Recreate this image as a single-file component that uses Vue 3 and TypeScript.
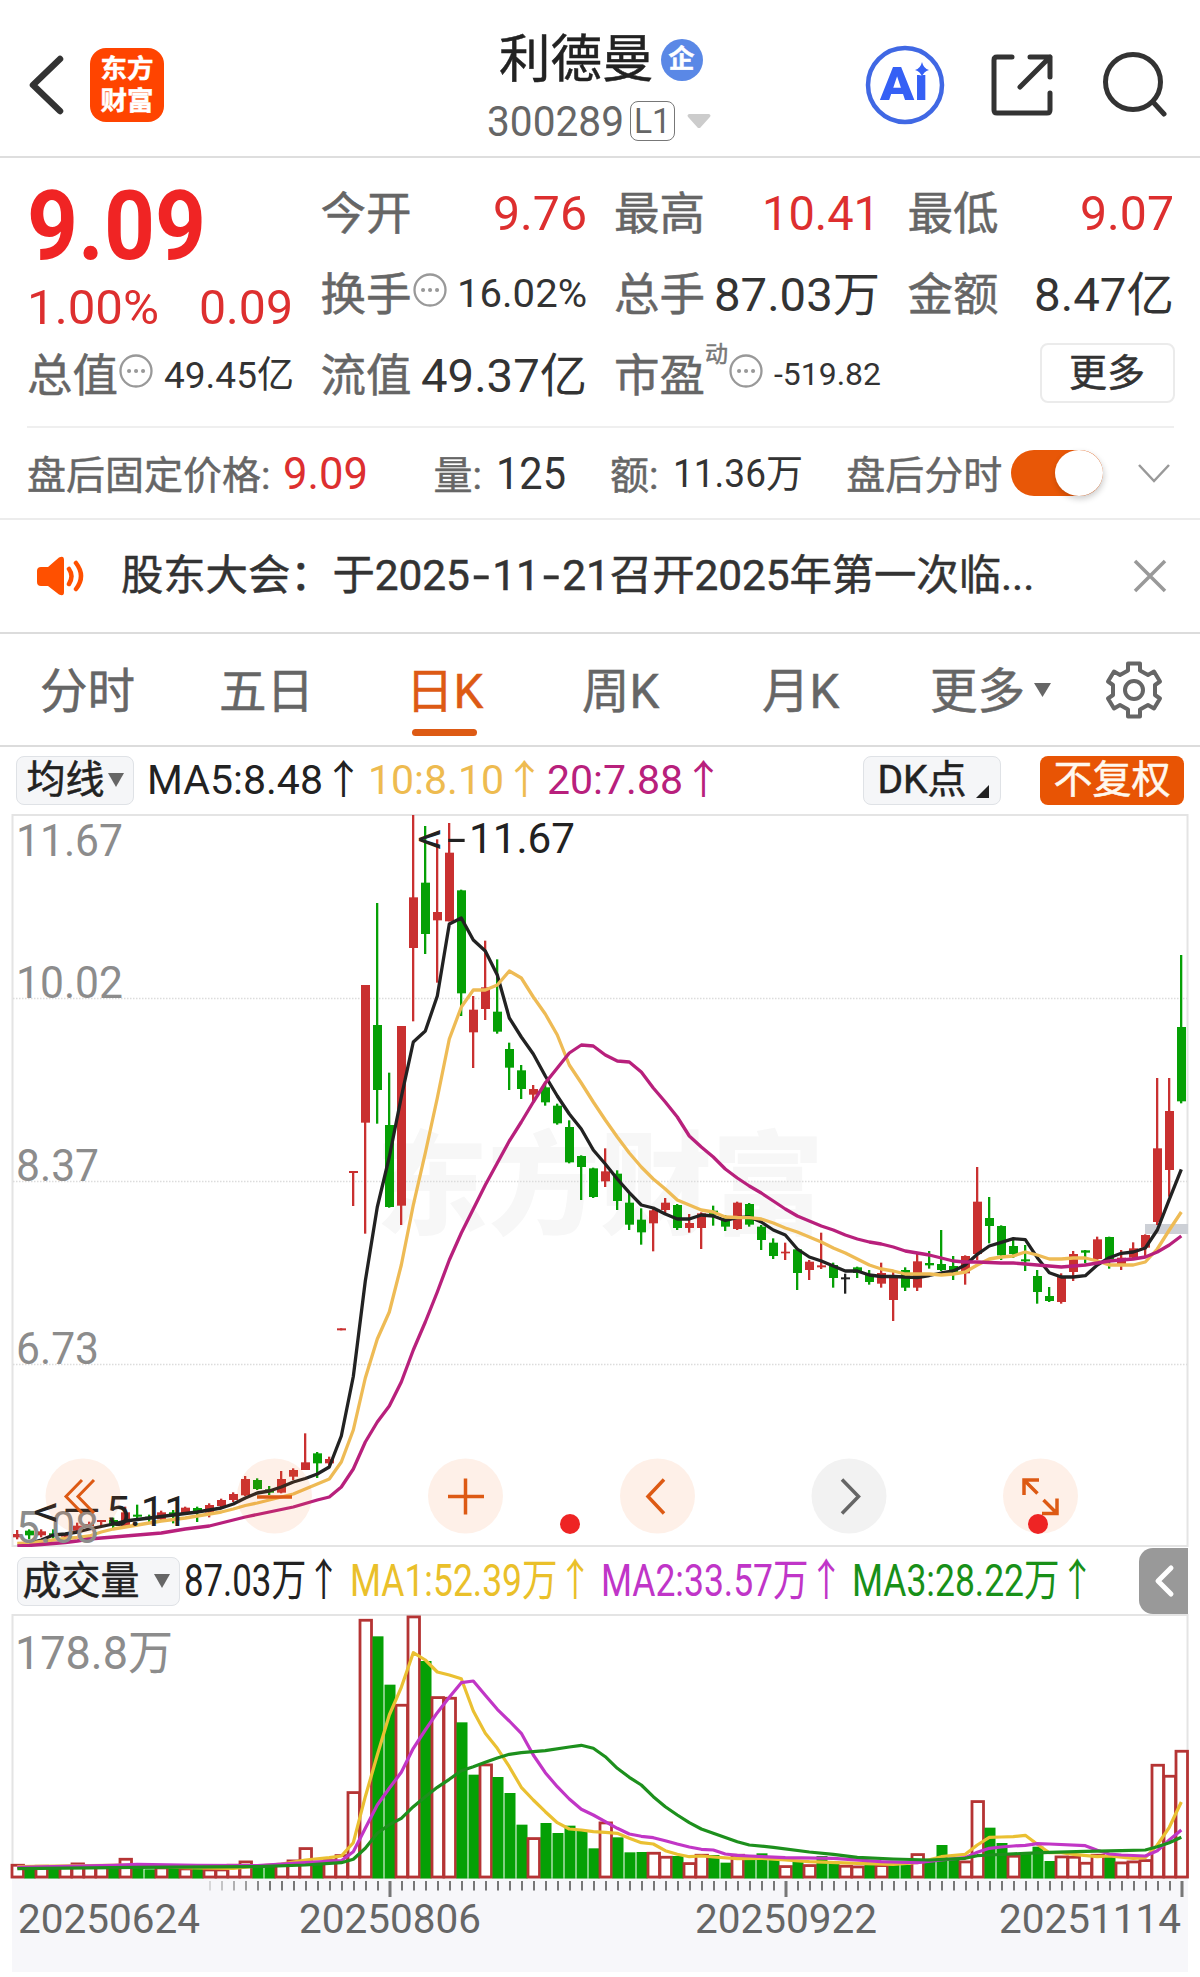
<script setup lang="ts">
import { h } from 'vue'

interface FitProps {
  text: string
  w: number
  size: number
}

// Single-line label stretched to an exact advance width.
const FitText = (props: FitProps) =>
  h(
    'svg',
    {
      class: 'fit',
      width: props.w,
      height: Math.round(props.size * 1.2),
      style: { overflow: 'visible', display: 'block', flex: 'none' },
    },
    [
      h(
        'text',
        {
          x: 0,
          y: props.size * 0.956,
          'font-size': props.size,
          fill: 'currentColor',
          textLength: props.w,
          lengthAdjust: 'spacingAndGlyphs',
        },
        props.text,
      ),
    ],
  )
FitText.props = ['text', 'w', 'size']

interface Cell {
  label: string
  value: string
  w: number
  size: number
  red?: boolean
  info?: boolean
}
const cells: Cell[][] = [
  [
    { label: '今开', value: '9.76', w: 94, size: 48, red: true },
    { label: '最高', value: '10.41', w: 118, size: 48, red: true },
    { label: '最低', value: '9.07', w: 94, size: 48, red: true },
  ],
  [
    { label: '换手', value: '16.02%', w: 130, size: 38, info: true },
    { label: '总手', value: '87.03万', w: 166, size: 47 },
    { label: '金额', value: '8.47亿', w: 140, size: 47 },
  ],
]

const tabs = ['分时', '五日', '日K', '周K', '月K']

const STEP = 12
const cx = (i: number) => 17 + i * STEP

type Kind = 'r' | 'g' | 'k'
// kind, body top, body bottom, high, low (chart pixel rows)
const early: [Kind, number, number, number, number][] = [
  ['r', 822, 832, 810, 838], ['g', 812, 826, 808, 838], ['r', 814, 826, 808, 832], ['g', 820, 826, 808, 835],
  ['r', 825, 830, 825, 838], ['r', 797, 812, 788, 820], ['r', 792, 798, 785, 805], ['r', 780, 786, 780, 800],
  ['g', 780, 797, 773, 805], ['r', 757, 800, 740, 800], ['g', 764, 770, 734, 782], ['g', 770, 778, 764, 790],
  ['r', 757, 778, 752, 783], ['g', 757, 763, 750, 790], ['r', 743, 760, 740, 765], ['g', 744, 758, 740, 786],
  ['r', 735, 758, 730, 772], ['r', 720, 738, 716, 742], ['r', 702, 720, 697, 726], ['r', 657, 706, 648, 708],
  ['g', 660, 687, 655, 690], ['g', 688, 698, 678, 705], ['r', 657, 698, 633, 700], ['r', 630, 650, 625, 660],
  ['r', 607, 630, 520, 630], ['g', 580, 610, 576, 654], ['r', 597, 610, 590, 617], ['r', 205, 211, 205, 211],
]
const middle: [Kind, number, number, number, number][] = [
  ['r', 1113, 1119, 1113, 1218], ['r', 555, 968, 555, 1301], ['g', 675, 870, 309, 971], ['g', 975, 1221, 818, 1223],
  ['r', 678, 1217, 678, 1275], ['r', 292, 444, 45, 664], ['g', 248, 402, 78, 462], ['r', 336, 361, 118, 548],
  ['r', 158, 364, 69, 364], ['g', 271, 580, 269, 648], ['r', 629, 697, 588, 804], ['r', 562, 627, 422, 660],
  ['g', 635, 695, 478, 701], ['g', 747, 803, 728, 870], ['g', 811, 867, 795, 897], ['r', 867, 884, 855, 905],
  ['g', 862, 907, 845, 917], ['g', 917, 970, 911, 974], ['g', 981, 1087, 961, 1090], ['g', 1068, 1101, 1066, 1200],
  ['g', 1105, 1191, 1103, 1194], ['r', 1114, 1144, 1045, 1161], ['g', 1121, 1203, 1111, 1230], ['g', 1208, 1274, 1180, 1290],
  ['g', 1259, 1297, 1225, 1334], ['r', 1231, 1270, 1225, 1354], ['r', 1208, 1230, 1194, 1240], ['g', 1215, 1284, 1212, 1290],
  ['r', 1269, 1284, 1242, 1298], ['r', 1240, 1284, 1237, 1347], ['g', 1232, 1244, 1217, 1277], ['g', 1255, 1280, 1245, 1293],
  ['r', 1208, 1287, 1205, 1290],
]
const late: [Kind, number, number, number, number][] = [
  ['g', 912, 974, 909, 980], ['g', 980, 1020, 975, 1050], ['g', 1028, 1068, 1015, 1077], ['r', 1055, 1060, 1028, 1080],
  ['g', 1048, 1119, 1045, 1170], ['r', 1085, 1110, 1080, 1140], ['r', 1096, 1102, 998, 1107], ['g', 1095, 1134, 1088, 1163],
  ['k', 1132, 1138, 1121, 1181], ['g', 1102, 1119, 1100, 1134], ['g', 1122, 1146, 1110, 1154], ['r', 1119, 1151, 1088, 1163],
  ['r', 1130, 1200, 1115, 1263], ['g', 1110, 1163, 1102, 1173], ['r', 1084, 1163, 1058, 1173], ['g', 1089, 1096, 1053, 1106],
  ['g', 1092, 1110, 990, 1113], ['g', 1098, 1122, 1068, 1140], ['r', 1068, 1120, 1066, 1154], ['r', 905, 1062, 801, 1080],
  ['g', 954, 978, 891, 1030], ['g', 978, 1066, 976, 1080], ['g', 1038, 1062, 1015, 1074], ['g', 1078, 1084, 1035, 1113],
  ['g', 1128, 1176, 1110, 1211], ['g', 1188, 1203, 1161, 1206], ['r', 1128, 1206, 1120, 1211], ['r', 1062, 1116, 1053, 1143],
  ['g', 1051, 1058, 1050, 1090], ['r', 1018, 1077, 1010, 1080], ['g', 1011, 1078, 1010, 1106], ['r', 1073, 1098, 1050, 1110],
  ['r', 1045, 1073, 1027, 1078], ['r', 1005, 1043, 1003, 1070], ['r', 745, 966, 534, 975], ['r', 633, 810, 534, 890],
  ['g', 381, 604, 165, 610],
]
const candles = [
  ...early.map((c) => ({ c, base: 1260 })),
  ...middle.map((c) => ({ c, base: 800 })),
  ...late.map((c) => ({ c, base: 900 })),
].map(({ c, base }, i) => ({
  x: cx(i),
  fill: { r: '#c93030', g: '#05a005', k: '#222' }[c[0]],
  top: base + c[1] / 3,
  bot: base + c[2] / 3,
  high: base + c[3] / 3,
  low: base + c[4] / 3,
}))

const line = (ys: number[], start = 0) => ys.map((y, i) => `${cx(i + start) + 0.3},${y}`).join(' ')
const ma5 = line([
  1543, 1540, 1535, 1534, 1532, 1529, 1526.5, 1524, 1521, 1519.5, 1518, 1516.5, 1515, 1513.5, 1512, 1510, 1508, 1504, 1498,
  1493, 1491, 1487, 1482, 1478.5, 1474, 1467, 1436, 1376.5, 1281, 1207, 1157, 1097, 1042, 1031, 996, 924, 918, 940, 951, 975,
  1018, 1037, 1054, 1076, 1096, 1114, 1129, 1150, 1164, 1179, 1192.7, 1205, 1208, 1214, 1219, 1219, 1215, 1216, 1220.5, 1217.7,
  1217, 1222, 1230, 1235, 1249, 1257, 1261, 1266, 1271, 1271, 1275, 1276.5, 1276.5, 1277, 1277.5, 1275.5, 1273, 1271,
  1265, 1254.3, 1246, 1242.3, 1238.7, 1239.7, 1257.7, 1272.7, 1277, 1277, 1275.7, 1265, 1257.7, 1253.3, 1252, 1248, 1230,
  1199.3, 1169.3,
], 1)
const ma10 = line([
  1543.5, 1543, 1541.5, 1540, 1538.5, 1537.5, 1536, 1532, 1529, 1527, 1525, 1523, 1521, 1519.5, 1518, 1516, 1514, 1512, 1509,
  1505.5, 1503, 1500, 1497, 1494, 1489, 1484, 1479, 1462, 1430, 1378, 1339, 1312, 1265, 1205, 1153, 1098, 1039, 1007, 990, 990,
  985, 971, 978, 997, 1014, 1035, 1065, 1083, 1102, 1120, 1137, 1153, 1167, 1179, 1189, 1200, 1205, 1210, 1212, 1217, 1217.5,
  1217.7, 1219, 1223, 1228, 1232, 1237, 1242, 1248, 1253, 1259, 1265, 1269, 1271, 1274, 1274, 1274, 1275, 1274, 1272, 1265,
  1259, 1257, 1256, 1252, 1255, 1259, 1259, 1258, 1258, 1261, 1265, 1265, 1265, 1262, 1249, 1230, 1212,
])
const ma20 = line([
  1546, 1545.5, 1544.5, 1543.5, 1542.5, 1541, 1539, 1538, 1537, 1536, 1535, 1534, 1533, 1531, 1529, 1527.5, 1526, 1523, 1520,
  1517, 1514.5, 1512, 1509.5, 1507, 1503.5, 1500, 1497, 1487, 1469, 1442, 1422, 1406, 1382, 1350, 1322, 1292, 1260, 1233, 1209,
  1185, 1163, 1141, 1122, 1102, 1083, 1068, 1053, 1045, 1046, 1055, 1061, 1062, 1072, 1088, 1102, 1117, 1136, 1147, 1157, 1169,
  1178, 1186, 1193, 1201, 1209, 1216, 1221, 1226, 1230, 1235, 1239, 1242, 1244, 1247, 1251, 1253, 1255, 1258, 1261, 1262, 1262,
  1262.5, 1263, 1263, 1264, 1265, 1266, 1267, 1266, 1265, 1263, 1261, 1260, 1259, 1257, 1252, 1245, 1236,
])

// Volume bar tops; a leading r / g marks an up / down day.
const volumes = (
  'r792 g798 r795 g800 r798 r788 r797 r797 g795 r774 g800 g808 r800 g800 r803 g805 r806 r806 r792 r782 g792 g795 r790 r779 ' +
  'r742 g790 r778 r763 r574 r57 g109 g254 r312 r47 g183 r289 r291 g367 g524 r491 g531 g579 g674 r712 g669 g699 g677 g690 g745 ' +
  'r665 g712 g757 g756 r756 r768 g768 r787 r762 g765 g788 r762 g775 g760 g778 r796 g783 r793 g768 g785 r795 r797 g792 r793 ' +
  'g794 g795 r760 g780 g735 g780 r782 r601 g683 g729 r765 g760 g740 g783 r767 r768 r786 r762 g770 r785 r782 r778 r492 r525 r450'
)
  .split(' ')
  .map((s, i) => ({ up: s[0] === 'r', x: cx(i), top: 1600 + Number(s.slice(1)) / 3 }))

const pairs = (s: string) =>
  s
    .split(' ')
    .map((p) => {
      const [i, y] = p.split(':').map(Number)
      return `${cx(i) + 0.3},${(1600 + y / 3).toFixed(1)}`
    })
    .join(' ')
const vma1 = pairs(
  '0:800 9:795 14:803 18:805 22:792 24:780 26:773 27:768 28:728 29:590 30:465 31:345 32:262 33:158 34:180 35:216 36:225 37:236 38:333 39:400 40:445 41:500 42:562 43:600 44:635 45:668 46:687 47:690 48:695 49:697 50:700 51:715 52:728 53:732 54:752 55:763 56:770 57:768 58:771 60:776 62:775 64:780 66:785 70:790 73:793 75:788 77:770 79:763 80:735 81:712 82:711 83:710 84:706 85:733 86:758 87:758 88:763 90:770 91:768 93:775 94:773 95:735 96:682 97:606',
)
const vma2 = pairs(
  '0:802 8:796 10:793 15:796 20:797 24:788 27:782 28:755 29:685 30:615 31:565 32:517 33:445 34:390 35:338 36:292 37:248 38:243 39:286 40:328 41:363 42:400 43:465 44:518 45:560 46:597 47:628 48:645 49:665 50:685 51:702 52:709 53:713 54:722 55:732 56:741 57:748 58:750 59:762 60:766 61:768 64:773 68:775 72:785 75:788 77:780 79:773 80:757 81:745 82:741 83:738 84:736 85:731 86:732 89:737 90:751 91:762 92:765 94:768 95:752 96:720 97:690',
)
const vma3 = pairs(
  '0:806 10:802 20:800 24:795 27:788 28:778 29:745 30:700 31:674 32:655 33:620 34:590 35:562 36:538 37:512 38:500 39:487 40:474 41:463 42:458 44:452 46:441 47:436 48:445 49:470 50:505 51:532 52:555 53:590 54:620 55:645 56:668 57:687 58:700 60:725 61:735 63:742 66:756 68:763 70:772 73:777 76:780 79:775 80:767 81:765 84:760 86:757 89:754 92:752 94:750 95:740 96:728 97:712',
)

const ticks = Array.from({ length: 82 }, (_, k) => k + 16).map((i) => ({
  x: cx(i) + 1,
  long: i === 31 || i === 64 || i === 97,
  opacity: Math.min(1, 0.25 + (i - 16) * 0.15),
}))

const priceLabels = [
  { t: '11.67', y: 856, w: 107 },
  { t: '10.02', y: 998, w: 107 },
  { t: '8.37', y: 1181, w: 83 },
  { t: '6.73', y: 1364, w: 83 },
  { t: '5.08', y: 1543, w: 83 },
]
const dates = [
  { t: '20250624', x: 18 },
  { t: '20250806', x: 299 },
  { t: '20250922', x: 695 },
  { t: '20251114', x: 999 },
]
const gearTeeth =
  'M-6-26.500H6V-19.500L14-15 20-18.500 26-8.500 21-5V5L26 8.500 20 18.500 14 15 6 19.500V26.500H-6V19.500L-14 15-20 18.500-26 8.500-21 5V-5L-26-8.500-20-18.500-14-15-6-19.500Z'
</script>

<template>
  <main class="app">
    <header class="head">
      <svg class="back" width="36" height="62" viewBox="0 0 36 62">
        <path d="M32 5 5 31 32 57" fill="none" stroke="#333" stroke-width="6.500" stroke-linecap="round" stroke-linejoin="round" />
      </svg>
      <div class="logo"><span>东方</span><span>财富</span></div>
      <div class="title">
        <div class="name"><span>利德曼</span><i class="ent">企</i></div>
        <div class="code">
          <FitText text="300289" :w="137" :size="42" />
          <span class="lv"><FitText text="L1" :w="37" :size="35" /></span>
          <svg width="24" height="15"><path d="M2 0H22Q25 1 22 4L13 14H11L2 4Q-1 1 2 0" fill="#ccc" /></svg>
        </div>
      </div>
      <div class="tools">
        <svg width="80" height="80" viewBox="0 0 80 80">
          <circle cx="40" cy="40" r="37" fill="#fff" stroke="#4068e4" stroke-width="4.500" />
          <text class="ai" x="15" y="55" font-size="47" textLength="48" lengthAdjust="spacingAndGlyphs">Ai</text>
          <circle cx="56" cy="22" r="8.500" fill="#fff" />
          <path d="M57 17Q58.500 23.500 64 25Q58.500 26.500 57 32Q55.500 26.500 50 25Q55.500 23.500 57 17" fill="#3560f5" />
        </svg>
        <svg class="share" width="64" height="64" viewBox="0 0 64 64" fill="none" stroke="#333" stroke-width="5" stroke-linecap="round" stroke-linejoin="round">
          <path d="M22 4H7Q4 4 4 7V57Q4 60 7 60H57Q60 60 60 57V40M40 4H60V24M60 4 30 34" />
        </svg>
        <svg width="66" height="66" viewBox="0 0 66 66" fill="none" stroke="#333" stroke-width="5" stroke-linecap="round">
          <circle cx="32" cy="31" r="27.500" /><path d="M52 51 63 63" />
        </svg>
      </div>
    </header>

    <section class="quote">
      <div class="price"><FitText text="9.09" :w="179" :size="96" /></div>
      <div class="chg red"><FitText text="1.00%" :w="132" :size="48" /><FitText text="0.09" :w="94" :size="48" /></div>
      <div class="cell total">
        <span class="lab">总值</span>
        <svg class="info" width="34" height="34"><circle cx="17" cy="17" r="15.500" /><path d="M10 17h.1M17 17h.1M24 17h.1" /></svg>
        <span class="val"><FitText text="49.45亿" :w="130" :size="37" /></span>
      </div>
      <template v-for="(row, r) in cells" :key="r">
        <div v-for="(c, k) in row" :key="c.label" class="cell" :style="{ gridColumn: k + 2, gridRow: r + 1 }">
          <span class="lab">{{ c.label }}</span>
          <svg v-if="c.info" class="info" width="34" height="34"><circle cx="17" cy="17" r="15.500" /><path d="M10 17h.1M17 17h.1M24 17h.1" /></svg>
          <span class="val" :class="{ red: c.red }"><FitText :text="c.value" :w="c.w" :size="c.size" /></span>
        </div>
      </template>
      <div class="cell flow"><span class="lab">流值</span><span class="val"><FitText text="49.37亿" :w="166" :size="47" /></span></div>
      <div class="cell pe">
        <span class="lab">市盈</span><sup>动</sup>
        <svg class="info" width="34" height="34"><circle cx="17" cy="17" r="15.500" /><path d="M10 17h.1M17 17h.1M24 17h.1" /></svg>
        <span class="val"><FitText text="-519.82" :w="107" :size="31.5" /></span>
      </div>
      <div class="cell more"><button>更多</button></div>
    </section>

    <section class="after">
      <span class="k">盘后固定价格:</span><span class="v1 red"><FitText text="9.09" :w="85" :size="44" /></span>
      <span class="k">量:</span><span class="v2"><FitText text="125" :w="70" :size="44" /></span>
      <span class="k">额:</span><span class="v3"><FitText text="11.36万" :w="130" :size="39" /></span>
      <span class="k">盘后分时</span>
      <span class="switch"><i></i></span>
      <svg class="down" width="34" height="20"><path d="M2 2 17 18 32 2" fill="none" stroke="#999" stroke-width="2.500" /></svg>
    </section>

    <section class="news">
      <svg width="50" height="42" viewBox="0 0 50 42">
        <path d="M5 12H12L23 2.500Q28 0 28 5V37Q28 42 23 39.500L12 31H5Q1 31 1 27V16Q1 12 5 12Z" fill="#ff5000" />
        <path d="M33 14Q38 21 33 29M40 8Q50 21 40 34" fill="none" stroke="#ff5000" stroke-width="4.500" stroke-linecap="round" />
      </svg>
      <p>股东大会：于2025<b>-</b>11<b>-</b>21召开2025年第一次临...</p>
      <svg width="34" height="34"><path d="M2 2 32 32M32 2 2 32" stroke="#999" stroke-width="3.500" /></svg>
    </section>

    <nav class="tabs">
      <span v-for="t in tabs" :key="t" :class="{ on: t === '日K' }">{{ t }}</span>
      <span>更多<svg class="tri" width="17" height="14"><path d="M0 0H17L8.500 14Z" fill="#666" /></svg></span>
      <svg class="gear" width="60" height="60" viewBox="-30 -30 60 60" fill="none" stroke="#666" stroke-width="4" stroke-linejoin="round">
        <path :d="gearTeeth" /><circle r="9" />
      </svg>
    </nav>

    <section class="ma">
      <span class="pill avg">均线<svg width="16" height="14"><path d="M0 0H16L8 14Z" fill="#666" /></svg></span>
      <FitText class="a" text="MA5:8.48↑" :w="217" :size="40" />
      <FitText class="b" text="10:8.10↑" :w="177" :size="40" />
      <FitText class="c" text="20:7.88↑" :w="177" :size="40" />
      <span class="pill dk">DK点<svg width="13" height="13"><path d="M13 0V13H0Z" fill="#222" /></svg></span>
      <span class="adj">不复权</span>
    </section>

    <svg class="chart" width="1200" height="734" viewBox="0 813 1200 734">
      <g class="mark"><text x="376" y="1226" font-size="112" textLength="448" lengthAdjust="spacingAndGlyphs">东方财富</text></g>
      <rect x="12.500" y="815" width="1175" height="731" fill="none" stroke="#e4e4e4" stroke-width="2" />
      <path d="M13 998.500H1187M13 1181.500H1187M13 1364.500H1187" stroke="#dcdcdc" stroke-width="1.500" stroke-dasharray="1.500 1.500" />
      <rect x="1145" y="1224" width="43" height="10" fill="#cdd0d6" />
      <g v-for="c in candles" :key="c.x" :fill="c.fill">
        <rect :x="c.x - 1" :y="c.high" width="2.300" :height="c.low - c.high" />
        <rect :x="c.x - 4" :y="c.top" width="9" :height="c.bot - c.top" />
      </g>
      <g fill="none" stroke-width="3.300" stroke-linejoin="round">
        <polyline :points="ma5" stroke="#222" />
        <polyline :points="ma10" stroke="#eebb55" />
        <polyline :points="ma20" stroke="#b8207c" />
      </g>
      <text v-for="l in priceLabels" :key="l.t" x="16" :y="l.y" font-size="44.500" fill="#8c8c8c" :textLength="l.w" lengthAdjust="spacingAndGlyphs">{{ l.t }}</text>
      <g fill="#222" font-size="43">
        <text x="417" y="853" textLength="27" lengthAdjust="spacingAndGlyphs">&lt;</text>
        <text x="447" y="853" textLength="19" lengthAdjust="spacingAndGlyphs">-</text>
        <text x="469" y="853" textLength="106" lengthAdjust="spacingAndGlyphs">11.67</text>
        <text x="33" y="1526" textLength="27" lengthAdjust="spacingAndGlyphs">&lt;</text>
        <text x="62" y="1526" textLength="39" lengthAdjust="spacingAndGlyphs">—</text>
        <text x="106" y="1526" textLength="82" lengthAdjust="spacingAndGlyphs">5.11</text>
      </g>
      <g fill="#f76b1c" fill-opacity=".1">
        <circle cx="83" cy="1496" r="37.500" /><circle cx="274.500" cy="1496" r="37.500" /><circle cx="465.500" cy="1496" r="37.500" />
        <circle cx="657.500" cy="1496" r="37.500" /><circle cx="1040.500" cy="1496" r="37.500" />
      </g>
      <circle cx="849" cy="1496" r="37.500" fill="#f2f2f2" />
      <g fill="none" stroke="#dd5a14" stroke-width="3.500">
        <path d="M82 1480 66 1496.500 82 1513M94 1480 78 1496.500 94 1513" stroke-width="3" />
        <path d="M257 1497H292M448 1496.500H484M465.500 1478.500V1514.500" />
        <path d="M664 1479.500 648 1496.500 664 1513.500" />
        <path d="M1039 1480H1024V1495M1024 1480 1037.500 1493.500M1042 1513.500H1057V1498.500M1057 1513.500 1043.500 1500" />
        <path d="M842 1479.500 858.500 1496.500 842 1513.500" stroke="#666" />
      </g>
      <circle cx="570" cy="1524" r="10" fill="#ee2424" /><circle cx="1038" cy="1524" r="10" fill="#ee2424" />
    </svg>

    <section class="vol">
      <span class="pill">成交量<svg width="16" height="14"><path d="M0 0H16L8 14Z" fill="#666" /></svg></span>
      <FitText class="a" text="87.03万↑" :w="157" :size="44" />
      <FitText class="b" text="MA1:52.39万↑" :w="243" :size="44" />
      <FitText class="c" text="MA2:33.57万↑" :w="243" :size="44" />
      <FitText class="d" text="MA3:28.22万↑" :w="243" :size="44" />
      <span class="fold"><svg width="22" height="34"><path d="M18 4 5 17 18 30" fill="none" stroke="#fff" stroke-width="5" stroke-linecap="round" stroke-linejoin="round" /></svg></span>
    </section>

    <svg class="chart" width="1200" height="363" viewBox="0 1614 1200 363">
      <rect x="12" y="1878" width="1176" height="94" fill="#f7f7fa" />
      <rect x="12.500" y="1615" width="1175" height="263" fill="none" stroke="#e4e4e4" stroke-width="2" />
      <text x="15" y="1669" font-size="47" fill="#8c8c8c" textLength="158" lengthAdjust="spacingAndGlyphs">178.8万</text>
      <template v-for="v in volumes" :key="v.x">
        <rect v-if="v.up" :x="v.x - 5" :y="v.top + 1.250" width="11.500" :height="1877 - v.top - 1.250" fill="#fff" stroke="#b53434" stroke-width="2.800" />
        <rect v-else :x="v.x - 4.500" :y="v.top" width="11" :height="1878.500 - v.top" fill="#05a005" />
      </template>
      <g fill="none" stroke-width="3.200" stroke-linejoin="round">
        <polyline :points="vma1" stroke="#eac032" />
        <polyline :points="vma2" stroke="#c136c6" />
        <polyline :points="vma3" stroke="#1d901d" />
      </g>
      <rect v-for="t in ticks" :key="t.x" :x="t.x - (t.long ? 1.500 : 1)" y="1881" :width="t.long ? 3 : 2" :height="t.long ? 16 : 9.500" fill="#777" :opacity="t.opacity" />
      <text v-for="d in dates" :key="d.t" :x="d.x" y="1932.500" font-size="40.500" fill="#666" textLength="182" lengthAdjust="spacingAndGlyphs">{{ d.t }}</text>
    </svg>
  </main>
</template>

<style>
body {
  background: #fff;
}
</style>

<style scoped>
.app {
  width: 1200px;
  height: 1977px;
  overflow: hidden;
  background: #fff;
  color: #333;
  font-family: Roboto, 'Noto Sans CJK SC', sans-serif;
  -webkit-text-stroke: 0.5px;
}
.app > * {
  box-sizing: border-box;
}
.red {
  color: #dd2f2f;
}
.head {
  display: grid;
  grid-template-columns: 62px 74px 1fr 304px;
  height: 158px;
  padding: 0 28px;
  border-bottom: 2px solid #dedede;
}
.back {
  margin-top: 54px;
}
.logo {
  display: flex;
  flex-direction: column;
  justify-content: center;
  align-items: center;
  width: 74px;
  height: 74px;
  margin-top: 48px;
  border-radius: 16px;
  background: #ff4400;
  color: #fff;
  font-size: 26.500px;
  font-weight: 700;
  line-height: 32px;
}
.title {
  display: flex;
  flex-direction: column;
  padding: 26px 0 0 323px;
  white-space: nowrap;
}
.name {
  display: flex;
  align-items: center;
  gap: 7px;
  margin-left: 12px;
  height: 66px;
  color: #222;
  font-size: 51.500px;
}
.name span {
  line-height: 66px;
  margin-top: 1px;
}
.ent {
  width: 42px;
  height: 42px;
  margin-top: 2px;
  border-radius: 50%;
  background: #5a88e6;
  color: #fff;
  font-size: 26px;
  font-style: normal;
  font-weight: 700;
  line-height: 41px;
  text-align: center;
}
.code {
  display: flex;
  align-items: center;
  height: 58px;
  color: #666;
}
.lv {
  display: flex;
  justify-content: center;
  align-items: center;
  box-sizing: border-box;
  width: 45px;
  height: 40px;
  margin: 0 12px 0 6px;
  border: 1.500px solid #777;
  border-radius: 8px;
}
.tools {
  display: flex;
  gap: 44px;
  padding-top: 45px;
  margin-left: -3px;
}
.tools svg {
  flex: none;
}
.share {
  margin: 8px 3px 0 1px;
}
.tools svg:last-child {
  margin-top: 6px;
  margin-left: 0;
}
.ai {
  fill: #3560f5;
  font-family: Roboto, sans-serif;
  font-weight: 900;
}
.quote {
  display: grid;
  grid-template-columns: repeat(4, 266px);
  grid-template-rows: repeat(3, 81px);
  column-gap: 27.500px;
  height: 270px;
  margin: 0 26px 0 27px;
  padding-top: 14px;
  border-bottom: 2px solid #efefef;
}
.price {
  grid-area: 1 / 1;
  margin-top: -5px;
  color: #f02424;
  font-weight: 700;
}
.chg {
  grid-area: 2 / 1;
  display: flex;
  align-items: center;
  justify-content: space-between;
  padding-top: 26px;
}
.cell {
  display: flex;
  align-items: center;
  height: 81px;
  white-space: nowrap;
}
.lab {
  margin-top: 4px;
  color: #666;
  font-size: 45.500px;
  line-height: 81px;
}
.val {
  margin-left: auto;
}
.info {
  flex: none;
  margin: -8px 0 0 1px;
  fill: none;
  stroke: #999;
  stroke-width: 2.300;
}
.info path {
  stroke-width: 4;
  stroke-linecap: round;
}
.total {
  grid-area: 3 / 1;
}
.total .val,
.pe .val {
  margin-right: -1px;
}
.flow {
  grid-area: 3 / 2;
}
.pe {
  grid-area: 3 / 3;
}
.pe sup {
  align-self: flex-start;
  width: 23px;
  margin: 6px 0 0 0;
  color: #777;
  font-size: 23px;
  line-height: 30px;
}
.pe .val {
  margin-top: -2px;
}
.more {
  grid-area: 3 / 4;
  justify-content: flex-end;
}
.more button {
  display: flex;
  justify-content: center;
  width: 135px;
  height: 60px;
  margin: -4px -1px 0 0;
  padding: 0;
  border: 2px solid #ebebeb;
  border-radius: 8px;
  background: #fff;
  color: #333;
  font: 38px/49px 'Noto Sans CJK SC', sans-serif;
}
.after {
  display: flex;
  align-items: center;
  height: 92px;
  padding-left: 27px;
  border-bottom: 2px solid #ececec;
  white-space: nowrap;
}
.after .k {
  margin-top: -3px;
  color: #666;
  font-size: 39px;
}
.v1 {
  width: 150px;
  margin-left: 13px;
}
.v2 {
  width: 114px;
  margin-left: 14px;
}
.v3 {
  width: 173px;
  margin-left: 15px;
}
.switch {
  width: 92px;
  height: 46px;
  margin-left: 9px;
  border-radius: 23px;
  background: #e85707;
}
.switch i {
  display: block;
  width: 48px;
  height: 46px;
  margin-left: 44px;
  border-radius: 50%;
  background: #fff;
  box-shadow: 1px 3px 6px rgba(0, 0, 0, 0.2);
}
.down {
  margin-left: 34px;
}
.news {
  display: flex;
  align-items: center;
  height: 114px;
  padding-left: 36px;
  border-bottom: 2px solid #dcdcdc;
}
.news p {
  width: 940px;
  margin: -9px 0 0 35px;
  font-size: 42.400px;
  letter-spacing: -0.08px;
  white-space: nowrap;
}
.news b {
  display: inline-block;
  width: 22.500px;
  font-weight: 400;
  text-align: center;
  transform: scaleX(1.4);
}
.news > svg:last-child {
  margin-left: 72px;
}
.tabs {
  display: grid;
  grid-template-columns: 179px 187px 176px 180px 168px 174px 60px;
  align-items: center;
  height: 113px;
  padding-left: 40px;
  border-bottom: 2px solid #dcdcdc;
  color: #666;
  font-size: 47.500px;
  line-height: 112px;
  white-space: nowrap;
}
.tabs span {
  margin-top: 2px;
}
.tabs .gear {
  margin-top: -2px;
}
.tabs .on {
  position: relative;
  color: #dd5a14;
}
.tabs .on::after {
  position: absolute;
  left: 6px;
  bottom: 12px;
  width: 65px;
  height: 7px;
  border-radius: 4px;
  background: #dd5a14;
  content: '';
}
.tri {
  margin: 0 0 11px 9px;
}
.ma,
.vol {
  display: flex;
  align-items: center;
  white-space: nowrap;
}
.ma {
  height: 66px;
  padding-left: 16px;
}
.pill,
.adj {
  display: flex;
  flex: none;
  align-items: center;
  justify-content: center;
  box-sizing: border-box;
  height: 49px;
  border-radius: 8px;
  font-size: 39px;
  line-height: 46px;
}
.pill {
  border: 1.500px solid #dfe2e6;
  background: #f5f6f8;
  color: #222;
}
.avg {
  width: 118px;
  gap: 3px;
}
.ma .a {
  margin-left: 13px;
  color: #222;
}
.ma .b {
  margin-left: 4px;
  color: #eebb50;
}
.ma .c {
  margin-left: 2px;
  color: #b8207c;
}
.dk {
  width: 138px;
  margin-left: 139px;
  gap: 9px;
  padding-left: 2px;
}
.dk svg {
  margin-top: 22px;
}
.adj {
  width: 144px;
  margin-left: 39px;
  background: #e85404;
  color: #fff8ee;
}
.chart {
  display: block;
}
.mark text {
  fill: #f7f7f7;
  font-weight: 900;
}
.vol {
  height: 67px;
  padding-left: 17px;
}
.vol .pill {
  width: 163px;
  margin-top: 1px;
  padding-right: 5px;
  gap: 14px;
}
.vol .a {
  margin-left: 4px;
  color: #222;
}
.vol .b {
  margin-left: 9px;
  color: #eac02a;
}
.vol .c {
  margin-left: 8px;
  color: #c035c8;
}
.vol .d {
  margin-left: 8px;
  color: #189018;
}
.fold {
  display: flex;
  align-items: center;
  justify-content: center;
  width: 49px;
  height: 66px;
  margin-left: auto;
  margin-right: 12px;
  border-radius: 14px 0 0 14px;
  background: #999;
}
</style>
